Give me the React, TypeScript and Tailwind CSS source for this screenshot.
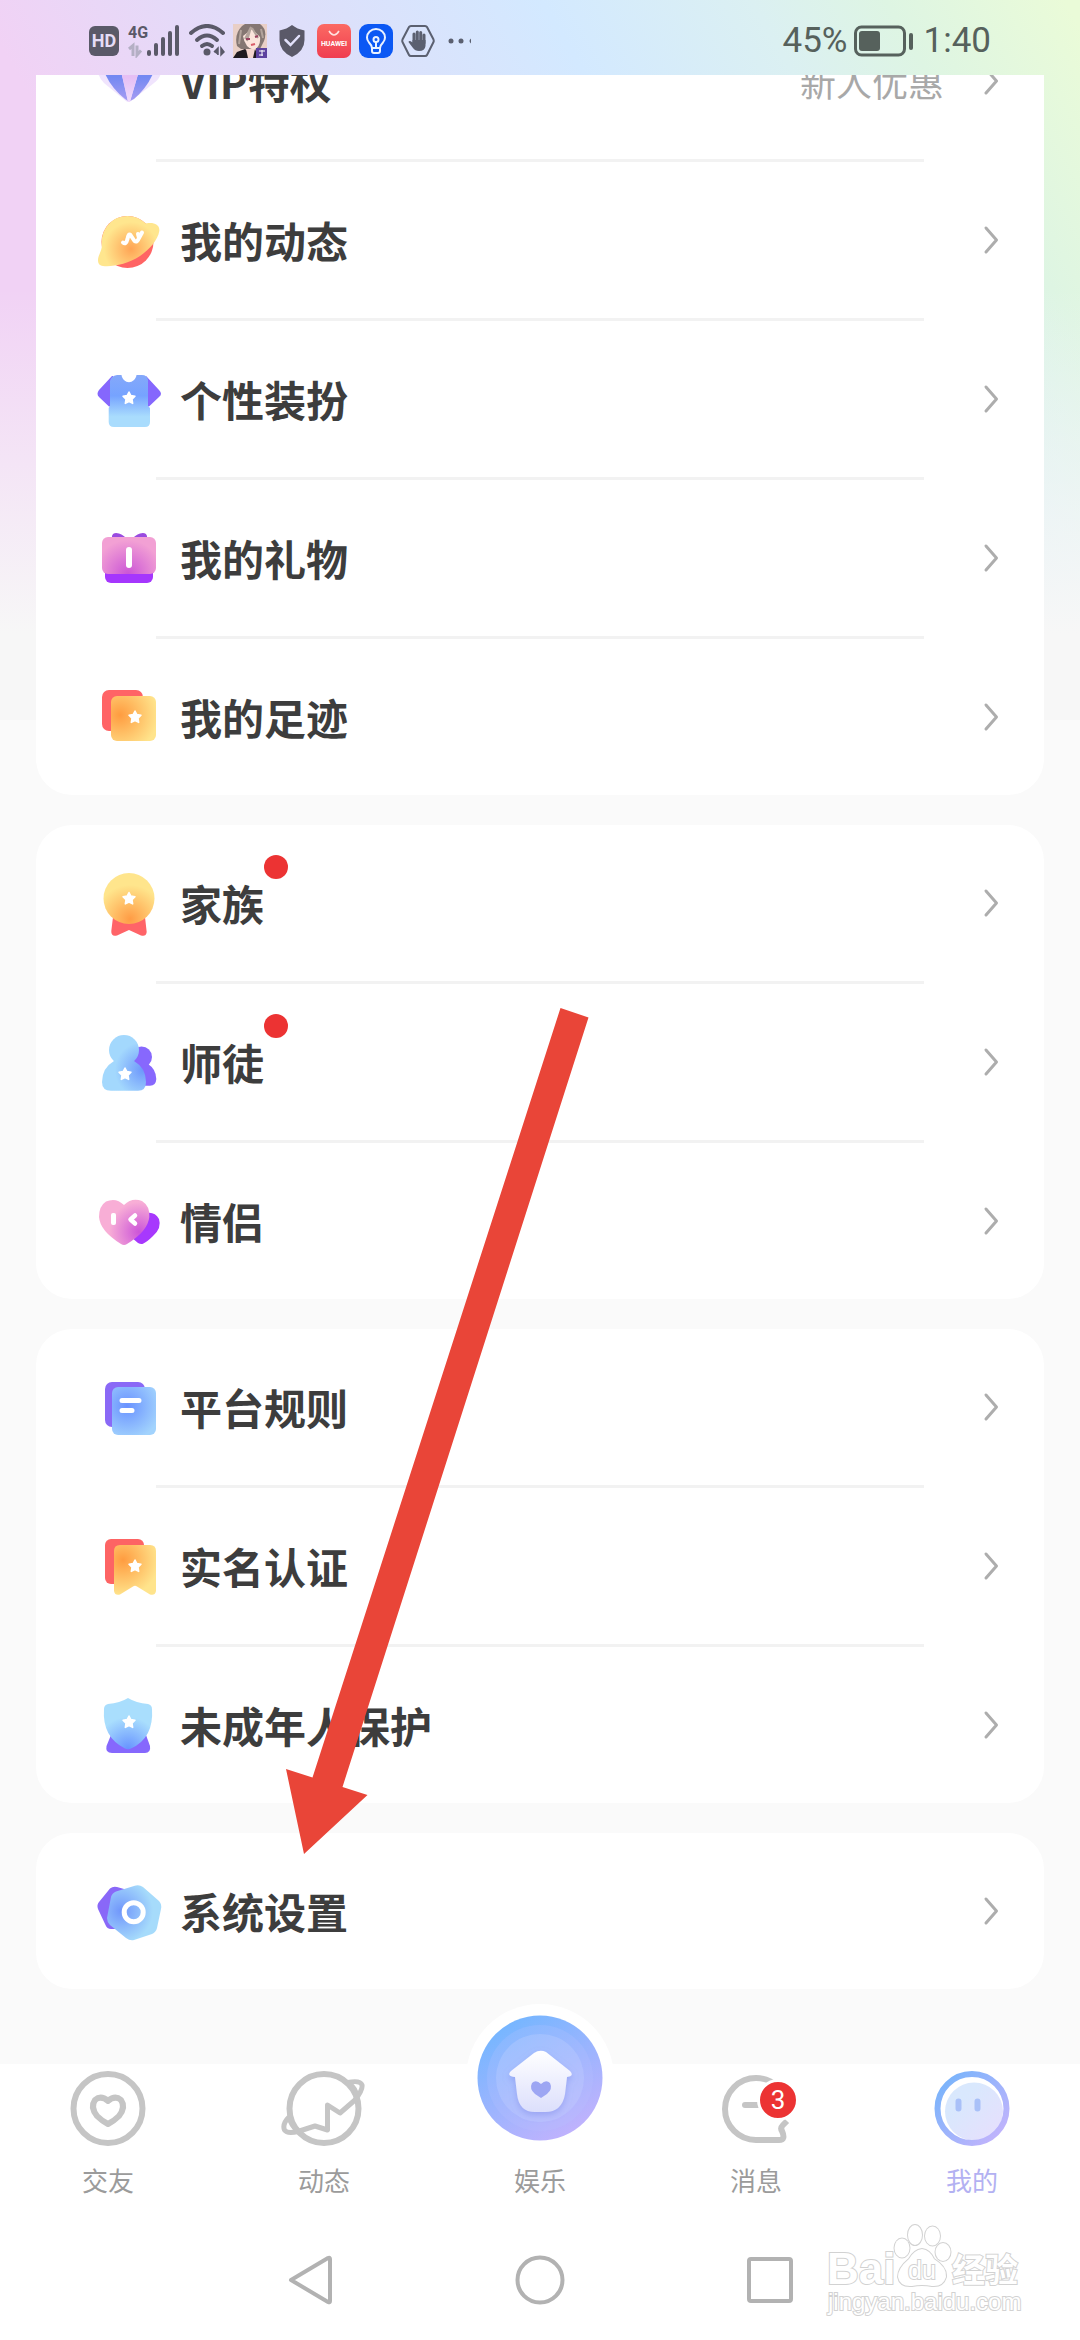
import type { ReactNode } from "react"

type Item = {
  title: string
  icon: ReactNode
  value?: string
  dot?: boolean
}

const STAR = "M0 -6 L1.9 -2.4 L6 -1.8 L3 1.2 L3.7 5.4 L0 3.5 L-3.7 5.4 L-3 1.2 L-6 -1.8 L-1.9 -2.4 Z"

function Star({ x, y }: { x: number; y: number }) {
  return <path d={STAR} transform={`translate(${x} ${y})`} fill="#fff" stroke="#fff" strokeWidth="1.5" strokeLinejoin="round" />
}

function Glow({ id, x, y, r, from, to }: { id: string; x: number; y: number; r: number; from: string; to: string }) {
  return (
    <radialGradient id={id} gradientUnits="userSpaceOnUse" cx={x} cy={y} r={r}>
      <stop offset="0" stopColor={from} />
      <stop offset="1" stopColor={to} />
    </radialGradient>
  )
}

function Glyph({ children }: { children: ReactNode }) {
  return (
    <svg viewBox="0 0 72 72" className="size-[72px] shrink-0" aria-hidden="true">
      {children}
    </svg>
  )
}

const gem = (
  <Glyph>
    <defs>
      <linearGradient id="gem" x1="0" y1="0" x2="0" y2="1">
        <stop offset="0.2" stopColor="#7489f2" />
        <stop offset="1" stopColor="#a79cf2" />
      </linearGradient>
      <linearGradient id="facet" x1="0" y1="0" x2="0" y2="1">
        <stop offset="0.2" stopColor="#e6bff4" />
        <stop offset="1" stopColor="#efdcfc" />
      </linearGradient>
    </defs>
    <path d="M16 12 H56 L68 27 Q67 34 61 38 L38 56 Q35 58 33 56 L11 38 Q6 33 5 27 Z" fill="#f0e4fd" />
    <path d="M11 26 H28 L35 56 L32 54 Q17 42 11 26 Z" fill="url(#gem)" />
    <path d="M61 26 H46 L37 56 L41 54 Q55 42 61 26 Z" fill="url(#gem)" />
    <path d="M28 26 H46 L37 57 H35 Z" fill="url(#facet)" />
  </Glyph>
)

const planet = (
  <Glyph>
    <defs><Glow id="planet" x={38} y={45} r={27} from="#ffa455" to="#ffe68e" /></defs>
    <circle cx="34.5" cy="38" r="26" fill="#ff6464" />
    <path
      d="M5 56 C5 52 8 48 8.8 43 C7 25 19 12 34.5 12 C42 12 48 15 53 19.5 C60 18 67 20 66.3 27 C65 36 56 46 47 52 C35 60 20 63 10 62 C6 61.5 5 59 5 56 Z"
      fill="url(#planet)"
    />
    <path d="M30 38.5 Q33 41 34.5 35 Q35.5 29 37.5 31 L41.5 37 Q44 39 46 34 L45 30 M46 34 L49 28.5" fill="none" stroke="#fff" strokeWidth="4" strokeLinecap="round" strokeLinejoin="round" />
  </Glyph>
)

const shirt = (
  <Glyph>
    <defs>
      <linearGradient id="shirt" x1="0" y1="0" x2="0" y2="1">
        <stop offset="0" stopColor="#84a8fa" />
        <stop offset="0.4" stopColor="#76a3ff" />
        <stop offset="0.8" stopColor="#a9dcfd" />
      </linearGradient>
    </defs>
    <path d="M19 13 L6 27 Q3 31 6 34 L16 43.5 H20 V13 Z M53 13 V43.5 H56 L66 34 Q70 31 66 27 L54 14 Z" fill="#8567fd" />
    <path d="M24 12 H28.5 C30 21.500 42 21.500 43.500 12 H49 Q54 12 55 17 V43 L57 45 V59 Q57 64 52 64 H21 Q15.700 64 15.700 59 V45 L17 43 V18 Q18 13 24 12 Z" fill="url(#shirt)" />
    <Star x={36} y={35} />
  </Glyph>
)

const gift = (
  <Glyph>
    <defs><Glow id="gift" x={35} y={52} r={34} from="#cb55d6" to="#f2a0d4" /></defs>
    <path d="M19 18 V14 Q20 10 26 11.5 Q31 13 35 18 Z M54 18 V14 Q53 10 47 11.5 Q42 13 38 18 Z" fill="#9a4be0" />
    <rect x="12" y="40" width="48" height="21" rx="6" fill="#a536fd" />
    <rect x="9" y="15" width="54" height="37" rx="6" fill="url(#gift)" />
    <rect x="33" y="25" width="6" height="21" rx="3" fill="#fff" />
  </Glyph>
)

const footprint = (
  <Glyph>
    <defs><Glow id="foot" x={27} y={34} r={38} from="#ff9c40" to="#ffe48c" /></defs>
    <rect x="9" y="9" width="41" height="41" rx="7" fill="#ff6466" />
    <rect x="18" y="15" width="45" height="45" rx="6" fill="url(#foot)" />
    <Star x={42} y={36} />
  </Glyph>
)

const medal = (
  <Glyph>
    <defs><Glow id="medal" x={37} y={52} r={34} from="#ff9c45" to="#ffe58c" /></defs>
    <path d="M20 50 H52 L53.7 65 Q53 70 48 68.5 L36 63 L24 68.5 Q18 70 18.3 64 Z" fill="#ff6468" />
    <circle cx="36" cy="31.5" r="25.5" fill="url(#medal)" />
    <Star x={36} y={31.5} />
  </Glyph>
)

const mentor = (
  <Glyph>
    <defs><Glow id="mentor" x={50} y={44} r={28} from="#6d97fb" to="#a3d8fd" /></defs>
    <circle cx="48.5" cy="31" r="10.5" fill="#8768fd" />
    <path d="M45 38 H55 Q63 43 63.3 53 Q63 59.7 57 59.7 H45 Z" fill="#8768fd" />
    <circle cx="31" cy="24" r="15" fill="url(#mentor)" />
    <path d="M21 35 H41 Q53 42 53 56 Q53 64.7 45 64.7 H18 Q9 64.7 9 56 Q9 42 21 35 Z" fill="url(#mentor)" />
    <Star x={32} y={48} />
  </Glyph>
)

const hearts = (
  <Glyph>
    <defs><Glow id="hearts" x={46} y={47} r={30} from="#cc55d8" to="#f8aed6" /></defs>
    <path d="M50 29 Q61 25 66 34 Q69 43 60 51 Q54 57 50 58.7 Q48 59.5 45 58 L38 52 Z" fill="#a738fd" />
    <path d="M31 20 Q39 12 49 16 Q57 21 56.3 32 Q55 46 34 59 Q31 61 28 59 Q7 46 6 32 Q6 21 13 16.5 Q23 12 31 20 Z" fill="url(#hearts)" />
    <rect x="18" y="28" width="5" height="12" rx="2" fill="#fff" />
    <path d="M42 30.5 L37.5 34.5 L42 38.5" fill="none" stroke="#fff" strokeWidth="4.5" strokeLinecap="round" strokeLinejoin="round" />
  </Glyph>
)

const rules = (
  <Glyph>
    <defs><Glow id="rules" x={34} y={35} r={34} from="#6a92ff" to="#a2d3fd" /></defs>
    <rect x="12" y="11" width="40" height="45" rx="7" fill="#8a69f6" />
    <rect x="19" y="16" width="44" height="48" rx="6" fill="url(#rules)" />
    <path d="M29 29.5 H46 M29 39.5 H39" stroke="#fff" strokeWidth="5" strokeLinecap="round" />
  </Glyph>
)

const ribbon = (
  <Glyph>
    <defs><Glow id="ribbon" x={30} y={30} r={36} from="#ff9c40" to="#ffe48c" /></defs>
    <rect x="12" y="9" width="39" height="45" rx="6" fill="#fd6464" />
    <path d="M27 15 H57 Q63 15 63 21 V61 Q62 66 57 64.5 L44 56.5 Q42 55 40 56.5 L27 64.5 Q22 66 21 61 V21 Q21 15 27 15 Z" fill="url(#ribbon)" />
    <Star x={42} y={36} />
  </Glyph>
)

const shield = (
  <Glyph>
    <defs><Glow id="shield" x={35} y={60} r={32} from="#6793ff" to="#a9defd" /></defs>
    <path d="M18 46 H53 L57 57 Q58 64 52 64 H19 Q12 64 13.5 57 Z" fill="#8668fd" />
    <path d="M35 9 Q43 14 55 15 Q59 16 59 20 Q61 49 38 59.5 Q35 61 32 59.5 Q9 48 11 20 Q11 16 15 15 Q27 14 35 9 Z" fill="url(#shield)" />
    <Star x={36} y={33} />
  </Glyph>
)

const settings = (
  <Glyph>
    <defs><Glow id="settings" x={28} y={36} r={32} from="#7096fb" to="#a6dbfb" /></defs>
    <path d="M17 13.5 Q20 11 24 12 L31 14 L30 54 H18 Q14 54 12.5 50 L5 34 Q3.5 30 6 27 Z" fill="#8968f8" />
    <path d="M41 11 Q46 9 50 12 L66 26 Q69 29 68 34 L64 53 Q63 57 59 59 L41 65 Q37 66 33 63 L17 50 Q14 47 14 43 L18 22 Q19 18 23 16.5 Z" fill="url(#settings)" />
    <circle cx="40.7" cy="37.3" r="9.5" fill="none" stroke="#fff" strokeWidth="5" />
  </Glyph>
)

const groups: Item[][] = [
  [
    { title: "VIP特权", icon: gem, value: "新人优惠" },
    { title: "我的动态", icon: planet },
    { title: "个性装扮", icon: shirt },
    { title: "我的礼物", icon: gift },
    { title: "我的足迹", icon: footprint },
  ],
  [
    { title: "家族", icon: medal, dot: true },
    { title: "师徒", icon: mentor, dot: true },
    { title: "情侣", icon: hearts },
  ],
  [
    { title: "平台规则", icon: rules },
    { title: "实名认证", icon: ribbon },
    { title: "未成年人保护", icon: shield },
  ],
  [{ title: "系统设置", icon: settings }],
]

function Row({ item }: { item: Item }) {
  return (
    <button type="button" className="flex h-[156px] w-full items-center pr-10 pl-[57px] text-left">
      {item.icon}
      <span className="ml-[15px] text-[42px] leading-[60px] font-bold text-[#3d3d3d]">{item.title}</span>
      {item.dot && <span className="mt-[30px] size-6 self-start rounded-full bg-[#ec3333]" />}
      {item.value && <span className="ml-auto text-[36px] leading-[54px] text-[#a8a8a8]">{item.value}</span>}
      <svg viewBox="0 0 24 36" className={item.value ? "ml-9 h-9 w-6" : "ml-auto h-9 w-6"} aria-hidden="true">
        <path d="M6 6 L16.5 18 L6 30" fill="none" stroke="#adadad" strokeWidth="3" strokeLinecap="round" strokeLinejoin="round" />
      </svg>
    </button>
  )
}

function Card({ items }: { items: Item[] }) {
  return (
    <ul className="rounded-[36px] bg-white">
      {items.map((item, i) => (
        <li key={item.title}>
          {i > 0 && <div className="mx-[120px] h-[3px] bg-[#f2f2f2]" />}
          <Row item={item} />
        </li>
      ))}
    </ul>
  )
}

function StatusBar() {
  return (
    <header className="flex h-[75px] items-center justify-between px-[89px] pt-[7px]">
      <div className="flex items-center gap-2">
        <span className="grid h-[30px] w-[30px] place-items-center rounded-md bg-[#5a5968] font-[Roboto,sans-serif] text-[18px] leading-none font-bold text-[#e5dcf6]">
          HD
        </span>
        <svg viewBox="0 0 54 34" className="h-[34px] w-[54px]" aria-hidden="true">
          <text x="1" y="14" fontFamily="Roboto, sans-serif" fontSize="16" fontWeight="700" fill="#5a5968">4G</text>
          <g fill="#5a5968">
            <rect x="20" y="26" width="4" height="6" rx="2" />
            <rect x="27" y="19" width="4" height="13" rx="2" />
            <rect x="34" y="13" width="4" height="19" rx="2" />
            <rect x="41" y="7" width="4" height="25" rx="2" />
            <rect x="48" y="1" width="4" height="31" rx="2" />
          </g>
          <path d="M2 25 L6 21.5 V32 M10 21.5 V31 L14 26.5" fill="none" stroke="#b4afc4" strokeWidth="3" />
        </svg>
        <svg viewBox="0 0 36 34" className="h-[34px] w-9" aria-hidden="true">
          <g fill="none" stroke="#5a5968" strokeWidth="4" strokeLinecap="round">
            <path d="M2 9 Q18 -5 34 9" />
            <path d="M8 16 Q18 7 28 16" />
            <path d="M13 22 Q18 18 23 22" />
          </g>
          <circle cx="18" cy="28" r="3.5" fill="#5a5968" />
          <path d="M25 28 L29 24 V31 M32 24 V31 L35 28 Z" fill="#5a5968" stroke="#5a5968" strokeWidth="1.5" />
        </svg>
        <svg viewBox="0 0 34 34" className="size-[34px]" aria-hidden="true">
          <rect width="34" height="34" fill="#e9cfc6" />
          <path d="M4 22 Q1 10 9 2 L12 0 H27 Q35 6 31 17 L27 25 H8 Z" fill="#857773" />
          <path d="M10 12 L19 5 L27 13 Q28 22 21 26 Q12 24 10 12 Z" fill="#fbe4dc" />
          <path d="M12 15 L18 3 L14 17 M19 4 L25 14 M8 6 L6 20 M28 5 L30 14" stroke="#b3a49c" strokeWidth="2" fill="none" />
          <path d="M13 15 H17 M22 13 L25 12" stroke="#9b4261" strokeWidth="2" />
          <path d="M18 21 L22 20" stroke="#d95b68" strokeWidth="2" />
          <path d="M0 34 L4 28 L12 25 L18 30 L22 25 L26 34 Z" fill="#1f1a20" />
          <path d="M13 25 H22 L20 34 H15 Z" fill="#f4d5ce" />
          <rect x="23" y="24" width="11" height="10" fill="#5d429f" />
          <path d="M26 27 H32 M26 31 H30 M29 26 V32" stroke="#fff" strokeWidth="1" />
        </svg>
        <svg viewBox="0 0 34 34" className="size-[34px]" aria-hidden="true">
          <path d="M17 1 Q22 5 29.5 6.5 V16 Q29.5 27 17 33 Q4.5 27 4.5 16 V6.5 Q12 5 17 1 Z" fill="#5a5968" />
          <path d="M10.5 16 L15.5 21 L24 12" fill="none" stroke="#e2e1fb" strokeWidth="2.5" strokeLinecap="round" />
        </svg>
        <svg viewBox="0 0 34 34" className="size-[34px]" aria-hidden="true">
          <defs>
            <linearGradient id="store" x1="0" y1="0" x2="0" y2="1">
              <stop offset="0" stopColor="#fb6a63" />
              <stop offset="1" stopColor="#f03d50" />
            </linearGradient>
          </defs>
          <rect width="34" height="34" rx="7" fill="url(#store)" />
          <path d="M12 7 Q17 15 22 7" fill="none" stroke="#ffe2df" strokeWidth="1.5" />
          <text x="17" y="22" textAnchor="middle" fontFamily="Roboto, sans-serif" fontSize="7" fontWeight="700" fill="#fff">HUAWEI</text>
        </svg>
        <svg viewBox="0 0 34 34" className="size-[34px]" aria-hidden="true">
          <rect width="34" height="34" rx="9" fill="#0b58f4" />
          <g fill="none" stroke="#e9f1ff" strokeWidth="2" strokeLinecap="round" strokeLinejoin="round">
            <path d="M13 24 Q12.5 21 10 18.5 Q8 16 8 13.5 A9 8.5 0 0 1 26 13.5 Q26 16 24 18.5 Q21.5 21 21 24 Z" />
            <path d="M13 24 V27 Q13 29 15 29 H19 Q21 29 21 27 V24 M17 18 V24" />
            <circle cx="17" cy="15.5" r="2.5" />
          </g>
        </svg>
        <svg viewBox="0 0 34 34" className="size-[34px]" aria-hidden="true">
          <path d="M10 2 H24 Q25.5 2 26 3 L32.5 15.5 Q33 17 32.5 18 L26 31 Q25.5 32 24 32 H10 Q8.5 32 8 31 L1.5 18 Q1 17 1.5 15.5 L8 3 Q8.5 2 10 2 Z" fill="none" stroke="#5b6070" strokeWidth="2" />
          <path d="M13 19 V10 M16.3 18 V8 M19.7 18 V8.5 M23 19 V11" stroke="#5b6070" strokeWidth="3" strokeLinecap="round" />
          <path d="M11.5 16 H24.5 V22 Q24 27 18 27 Q14 27 12 24 L7.5 18 Q8 16 11.5 18.5 Z" fill="#5b6070" />
        </svg>
        <svg viewBox="0 0 30 34" className="h-[34px] w-[30px]" fill="#5b6070" aria-hidden="true">
          <circle cx="8" cy="17" r="2.5" />
          <circle cx="18" cy="17" r="2.5" />
          <path d="M28 14.500 V19.500 Q25 17 28 14.500 Z" />
        </svg>
      </div>
      <div className="flex items-center font-[Roboto,sans-serif] text-[35px] leading-10 text-[#56615c]">
        <span>45%</span>
        <svg viewBox="0 0 60 32" className="ml-1.5 h-8 w-[60px]" aria-hidden="true">
          <rect x="1.5" y="2" width="49" height="28" rx="6" fill="none" stroke="#56615c" strokeWidth="3" />
          <rect x="5" y="6" width="21" height="20" rx="3" fill="#56615c" />
          <rect x="55" y="8" width="4" height="17" rx="2" fill="#56615c" />
        </svg>
        <span className="ml-2.5">1:40</span>
      </div>
    </header>
  )
}

function TabIcon({ children }: { children: ReactNode }) {
  return (
    <svg viewBox="0 0 88 80" className="h-20 w-[88px]" fill="none" stroke="#c5c5c5" strokeWidth="6" strokeLinejoin="round" aria-hidden="true">
      {children}
    </svg>
  )
}

const tabs = [
  {
    label: "交友",
    icon: (
      <TabIcon>
        <circle cx="44" cy="40.5" r="34.5" />
        <path d="M44 33 Q37 27 31 32 Q26 39 33 48 Q38 53 44 56 Q50 53 55 48 Q62 39 57 32 Q51 27 44 33 Z" />
      </TabIcon>
    ),
  },
  {
    label: "动态",
    icon: (
      <TabIcon>
        <circle cx="44" cy="40.5" r="34.5" />
        <path d="M9 49 Q2 56 4.5 62 Q7 66 18 63.5 L35 58 L47.5 62 V37 L60 45 L75 32 Q83 22 82 17 Q80 12 68 14.5 Q76 20 77 29" strokeWidth="5" />
        <path d="M9 49 Q11 58 18 63" strokeWidth="5" />
      </TabIcon>
    ),
  },
  { label: "娱乐", icon: <HomeDisc /> },
  {
    label: "消息",
    badge: 3,
    icon: (
      <TabIcon>
        <path d="M75 53 L71 57 Q68 60 70 63 Q74 72 67 72 H44 A31 31 0 1 1 75 41" />
        <path d="M33 37 H50" strokeLinecap="round" />
      </TabIcon>
    ),
  },
  {
    label: "我的",
    active: true,
    icon: (
      <TabIcon>
        <defs>
          <linearGradient id="me" x1="0" y1="0" x2="1" y2="1">
            <stop offset="0" stopColor="#72b4fb" />
            <stop offset="1" stopColor="#c9b3fc" />
          </linearGradient>
          <linearGradient id="face" x1="0" y1="0" x2="1" y2="1">
            <stop offset="0.3" stopColor="#d9e8fd" />
            <stop offset="1" stopColor="#e8defd" />
          </linearGradient>
        </defs>
        <circle cx="46" cy="43.5" r="29" fill="url(#face)" stroke="none" />
        <circle cx="44" cy="40.5" r="34.5" stroke="url(#me)" />
        <path d="M30.5 33.5 V40.5 M49.5 33.5 V40.5" stroke="#a9c0f8" strokeLinecap="round" />
      </TabIcon>
    ),
  },
]

function HomeDisc() {
  return (
    <span className="-mt-16 -mb-1 grid size-[148px] place-items-center rounded-full bg-white">
      <svg viewBox="0 0 126 126" className="size-[126px]" aria-hidden="true">
        <defs>
          <linearGradient id="disc" x1="0.2" y1="0.1" x2="0.75" y2="1">
            <stop offset="0" stopColor="#77b6ff" />
            <stop offset="1" stopColor="#c3b2fd" />
          </linearGradient>
          <linearGradient id="house" x1="0" y1="0" x2="0" y2="1">
            <stop offset="0" stopColor="#fff" />
            <stop offset="1" stopColor="#dcdffc" />
          </linearGradient>
          <filter id="soft" x="-30%" y="-30%" width="160%" height="160%">
            <feDropShadow dx="0" dy="3" stdDeviation="3" floodColor="#7f8ae8" floodOpacity="0.5" />
          </filter>
        </defs>
        <circle cx="63" cy="63" r="62.5" fill="url(#disc)" />
        <circle cx="63" cy="63" r="53" fill="#b9c4ff" fillOpacity="0.22" />
        <circle cx="63" cy="63" r="44" fill="#c6d3ff" fillOpacity="0.3" />
        <path
          d="M57 38 Q63 34 69 37 L93 56 Q98 61 90 62 L88 79 Q85 97 68 97 H58 Q42 97 40 79 L38 62 Q29 61 34 56 Z"
          fill="url(#house)"
          filter="url(#soft)"
        />
        <path d="M64 69 Q59 64 55 68 Q52 74 58 79 L64 83 L70 79 Q76 74 73 68 Q69 64 64 69 Z" fill="#9da6f3" />
      </svg>
    </span>
  )
}

function TabBar() {
  return (
    <nav className="relative grid grid-cols-5 items-end bg-white pt-1 pb-[22px]">
      {tabs.map((tab) => (
        <a key={tab.label} href="#" className="flex flex-col items-center">
          <span className="relative flex flex-col">
            {tab.icon}
            {tab.badge && (
              <span className="absolute top-[11px] left-[45px] grid size-[42px] place-items-center rounded-full border-[3px] border-white bg-[#ec3333] font-[Roboto,sans-serif] text-[26px] leading-none text-white">
                {tab.badge}
              </span>
            )}
          </span>
          <span className={tab.active ? "mt-3.5 text-[26px] leading-9 text-[#b3b1f2]" : "mt-3.5 text-[26px] leading-9 text-[#9b9b9b]"}>
            {tab.label}
          </span>
        </a>
      ))}
    </nav>
  )
}

function SystemNav() {
  return (
    <div className="flex h-[120px] items-center justify-center gap-[180px] bg-white">
      <button type="button" aria-label="返回">
        <svg viewBox="0 0 50 50" className="size-[50px]" fill="none" stroke="#b2b2b2" strokeWidth="4" strokeLinejoin="round">
          <path d="M6 25 L43 3 Q45 2 45 4 V46 Q45 48 43 47 Z" />
        </svg>
      </button>
      <button type="button" aria-label="主屏幕">
        <svg viewBox="0 0 50 50" className="size-[50px]" fill="none" stroke="#b2b2b2" strokeWidth="4">
          <circle cx="25" cy="25" r="22.5" />
        </svg>
      </button>
      <button type="button" aria-label="最近任务">
        <svg viewBox="0 0 50 50" className="size-[50px]" fill="none" stroke="#b2b2b2" strokeWidth="4">
          <rect x="4" y="4" width="42" height="42" rx="2" />
        </svg>
      </button>
    </div>
  )
}

function Watermark() {
  return (
    <svg
      viewBox="0 0 210 110"
      className="pointer-events-none absolute right-[50px] bottom-[15px] h-[110px] w-[210px]"
      fill="#fff"
      stroke="#d2d2d2"
      strokeWidth="2"
      paintOrder="stroke"
      fontFamily="'Liberation Sans', 'Noto Sans CJK SC', sans-serif"
    >
      <text x="7" y="69" fontSize="44" fontWeight="700">Bai</text>
      <g strokeWidth="2">
        <ellipse cx="82" cy="33" rx="7.5" ry="9.5" />
        <ellipse cx="95" cy="20" rx="7" ry="10" />
        <ellipse cx="112.5" cy="21" rx="7.5" ry="9.5" />
        <ellipse cx="123" cy="37" rx="7.5" ry="9" />
        <path d="M102 34 Q110 35 114 44 Q127 52 126 62 Q123 72 112 71 Q102 69 92 71 Q80 72 78 62 Q78 53 89 44 Q94 35 102 34 Z" />
      </g>
      <text x="102" y="64" fontSize="25" textAnchor="middle">du</text>
      <text x="132" y="67" fontSize="33" fontWeight="700">经验</text>
      <text x="8" y="95" fontSize="24">jingyan.baidu.com</text>
    </svg>
  )
}

export default function App() {
  return (
    <div className="relative min-h-screen overflow-hidden bg-[#fafafa] font-['Noto_Sans_CJK_SC',sans-serif]">
      {/* pastel wash behind the status bar and the page edges */}
      <div className="absolute inset-x-0 top-0 h-[720px] bg-[linear-gradient(180deg,#f7f7f700_0%,#f7f7f700_40%,#f7f7f7_88%),linear-gradient(60deg,#f1d2f5_26%,#dedffa_47%,#d3e9ff_64%,#dbf0f2_78%,#def5e3_87%,#eafbd8_99%)]" />

      <div className="relative">
        <StatusBar />
        <main className="overflow-hidden px-9 pb-[75px]">
          <div className="-mt-[72px] flex flex-col gap-[30px]">
            {groups.map((items) => (
              <Card key={items[0].title} items={items} />
            ))}
          </div>
        </main>
        <TabBar />
        <SystemNav />
        <Watermark />
      </div>

      <svg viewBox="0 0 304 848" className="pointer-events-none absolute top-[1007px] left-[285px] h-[848px] w-[304px]" aria-hidden="true">
        <path d="M275.5 1 L303.5 10.5 L57.5 780 L82.5 788 L19 847 L1 762 L27.5 770.5 Z" fill="#e94538" />
      </svg>
    </div>
  )
}
